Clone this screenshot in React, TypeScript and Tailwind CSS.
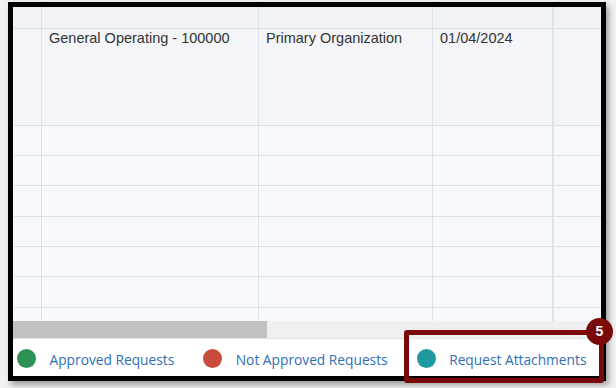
import React from "react";

const cols = "grid grid-cols-[29px_217px_174px_121px_47px]";
const cell = "border-r border-[#dbe2ea]";

function Row({ h, bg, children }: { h: string; bg: string; children?: React.ReactNode[] }) {
  const c = children ?? [];
  return (
    <div className={`${cols} ${h} ${bg} border-b border-[#d9e1e9]`}>
      <div className={cell} />
      <div className={cell}>{c[0]}</div>
      <div className={cell}>{c[1]}</div>
      <div className={`${cell} border-r-2 border-[#dde4eb]`}>{c[2]}</div>
      <div />
    </div>
  );
}

function Legend({ color, label, first }: { color: string; label: string; first?: boolean }) {
  return (
    <div className={`flex items-center ${first ? "" : "ml-[29px]"}`}>
      <span className={`block w-[19px] h-[19px] rounded-full ${color}`} />
      <span className="ml-[13.5px] text-[13.75px] text-[#2f6fb4] leading-[19px] pt-[2px]" style={{ fontFamily: '"Open Sans", sans-serif' }}>
        {label}
      </span>
    </div>
  );
}

export default function App() {
  const txt = "text-[14.5px] text-[#333333] leading-[17px] pt-[1px] pl-[7px] whitespace-nowrap";
  return (
    <div className="relative w-[616px] h-[388px] bg-[#f2f2f2] overflow-hidden" style={{ fontFamily: '"Liberation Sans", Arial, sans-serif' }}>
      <div className="ml-[8px] mt-[2px] w-[598px] h-[379px] border-[5px] border-black bg-white shadow-[3px_4px_6px_rgba(0,0,0,0.35)] flex flex-col">
        <Row h="h-[22px]" bg="bg-[#f1f3f6]" />
        <Row h="h-[97px]" bg="bg-[#f3f5f8]">
          {[
            <div key="a" className={txt}>General Operating - 100000</div>,
            <div key="b" className={txt}>Primary Organization</div>,
            <div key="c" className={txt}>01/04/2024</div>,
          ]}
        </Row>
        <Row h="h-[30px]" bg="bg-[#f7f9fc]" />
        <Row h="h-[30px]" bg="bg-[#f7f9fc]" />
        <Row h="h-[31px]" bg="bg-[#f7f9fc]" />
        <Row h="h-[30px]" bg="bg-[#f7f9fc]" />
        <Row h="h-[30px]" bg="bg-[#f7f9fc]" />
        <Row h="h-[31px]" bg="bg-[#f7f9fc]" />
        <div className={`${cols} h-[13px] bg-[#f7f9fc]`}>
          <div className={cell} />
          <div className={cell} />
          <div className={cell} />
          <div className={`${cell} border-r-2 border-[#dde4eb]`} />
          <div />
        </div>
        <div className="h-[17px] bg-[#f0f0f0] flex">
          <div className="w-[254px] h-full bg-[#c1c1c1]" />
        </div>
        <div className="h-px bg-[#dde4ea]" />
        <div className="flex-1 flex items-center pl-[4px] pt-[1px]">
          <Legend first color="bg-[#2e9158]" label="Approved Requests" />
          <Legend color="bg-[#c94b3b]" label="Not Approved Requests" />
          <Legend color="bg-[#1f9aa0]" label="Request Attachments" />
        </div>
      </div>
      <div className="absolute left-[404px] top-[330px] w-[200px] h-[53px] border-[5px] border-[#7a0a0a] rounded-[3px]" />
      <div
        className="absolute left-[586px] top-[318px] w-[27px] h-[27px] rounded-full bg-[#7a0a0a] flex items-center justify-center text-white font-bold text-[14px]"
        style={{ fontFamily: '"Liberation Sans", Arial, sans-serif' }}
      >
        5
      </div>
    </div>
  );
}
